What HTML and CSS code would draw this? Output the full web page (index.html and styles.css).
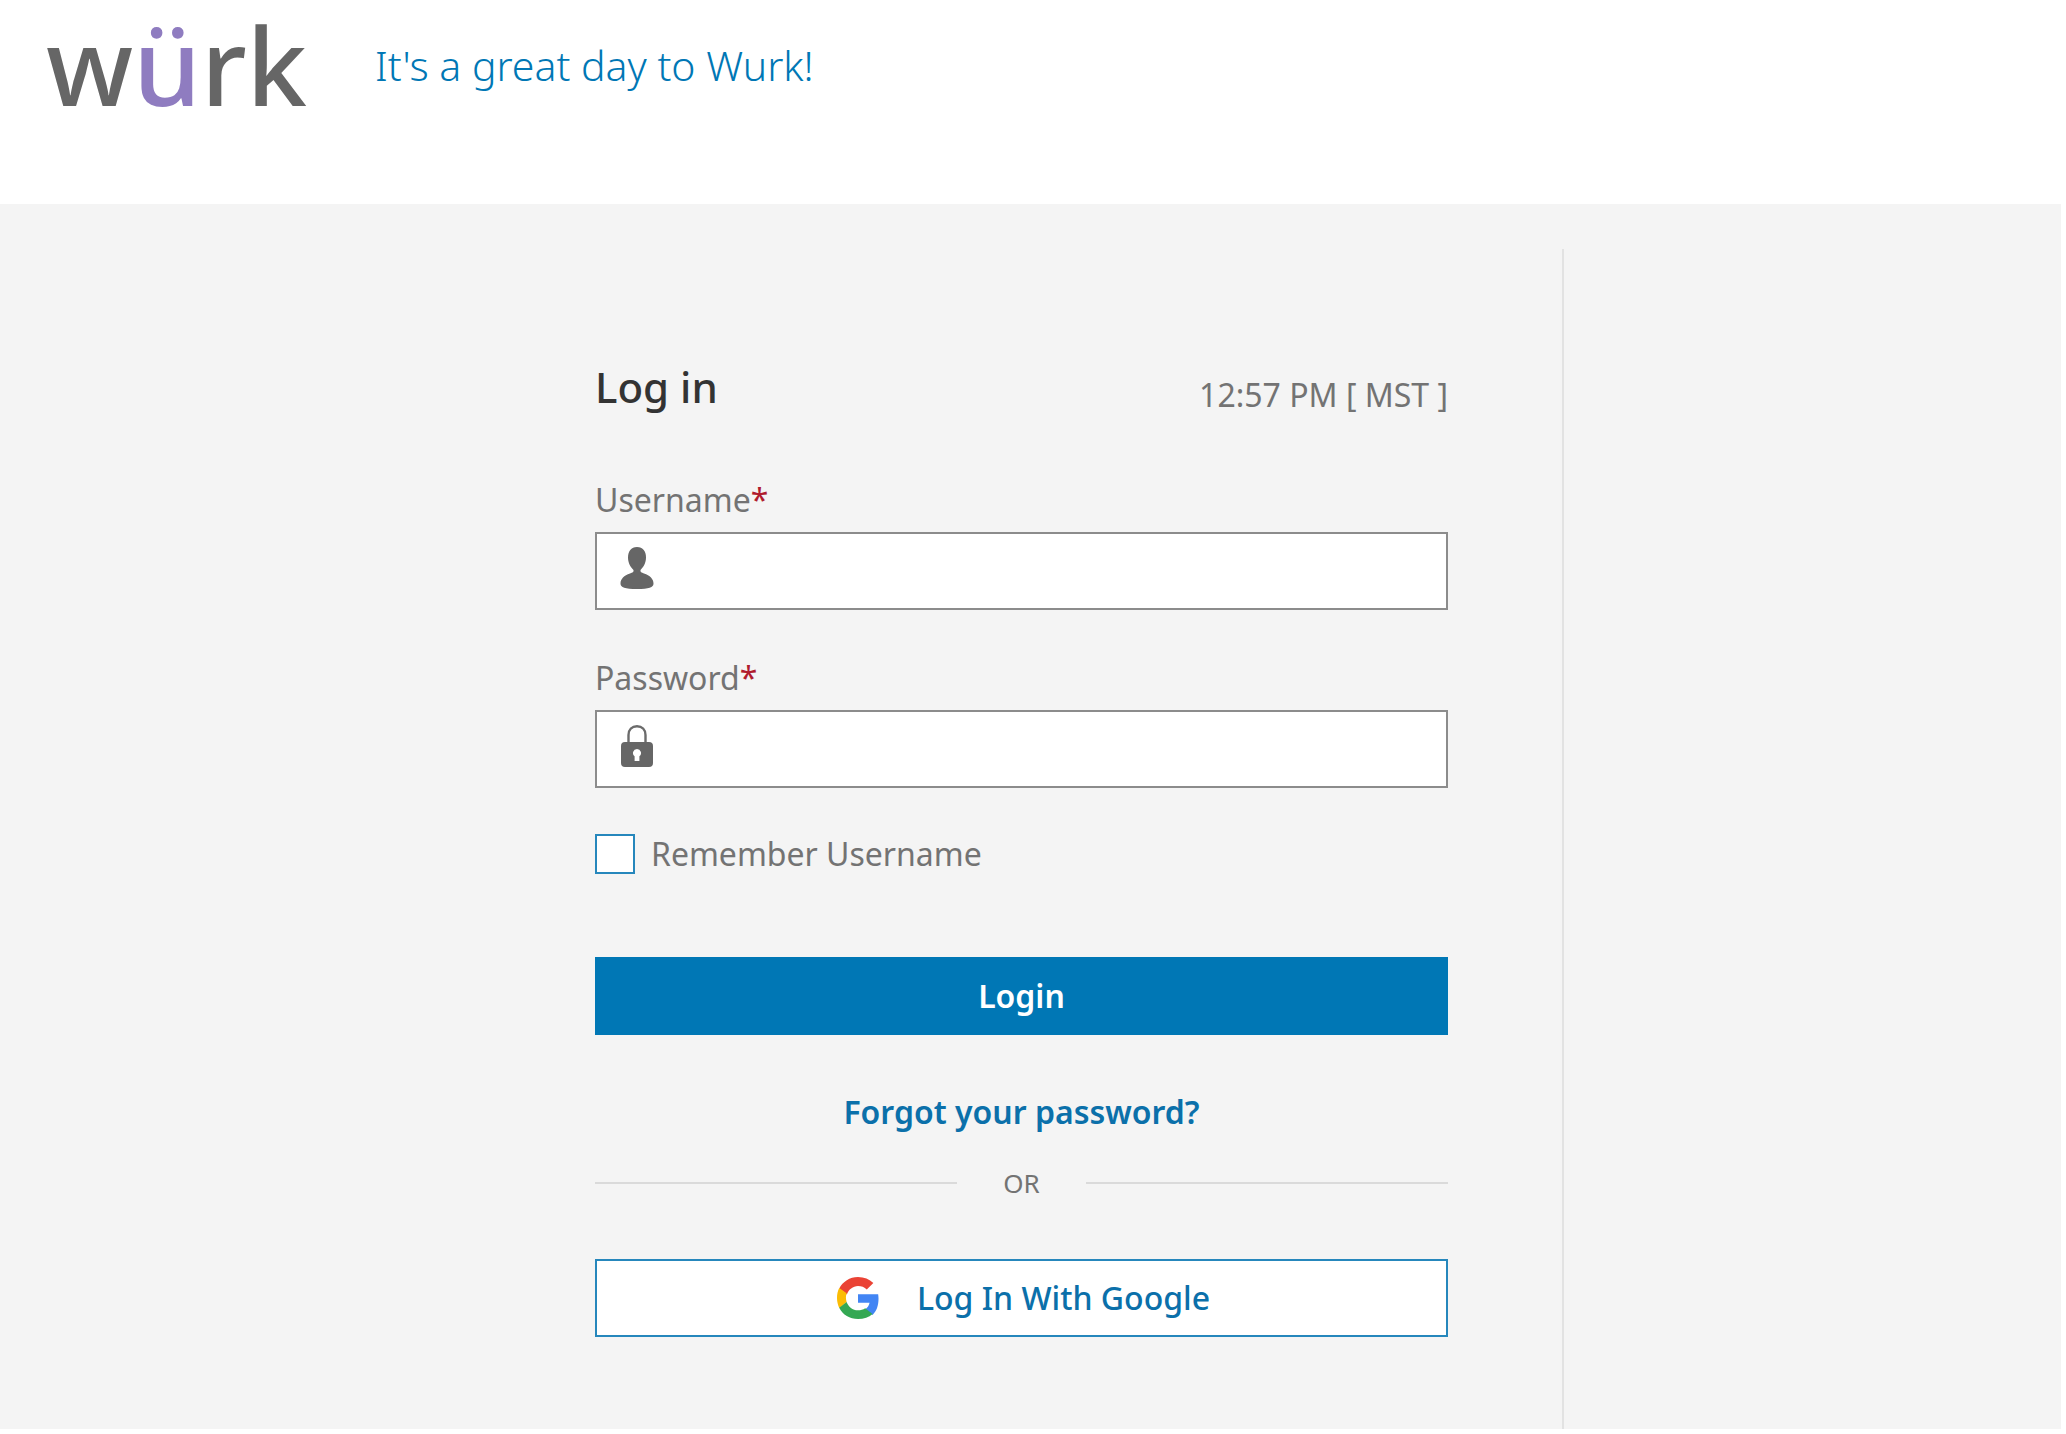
FILE: index.html
```html
<!DOCTYPE html>
<html lang="en">
<head>
    <meta charset="UTF-8">
    <meta name="viewport" content="width=device-width, initial-scale=1.0">
    <title>Log in</title>
    <link rel="stylesheet" href="styles.css">
</head>
<body>
    <header class="head">
        <div class="logo">w<span>ü</span>rk</div>
        <p class="slogan">It's a great day to Wurk!</p>
    </header>
    <main class="content">
        <div class="left">
            <form class="login" action="#">
                <div class="title">
                    <h1>Log in</h1>
                    <span class="time">12:57 PM [ MST ]</span>
                </div>
                <div class="field">
                    <label for="username">Username<span class="star">*</span></label>
                    <div class="inputBox">
                        <svg viewBox="0 0 34 48" width="34" height="48" aria-hidden="true">
                            <path d="M17 0C11 0 8 4.500 8 10.500C8 16 10.500 20 13.500 23C14 25 12.500 25.500 10 26.500C4 28.500 0.500 32 0.500 36.500C0.500 40.500 5 42 17 42S33.500 40.500 33.500 36.500C33.500 32 30 28.500 24 26.500C21.500 25.500 20 25 20.500 23C23.500 20 26 16 26 10.500C26 4.500 23 0 17 0Z"/>
                        </svg>
                        <input type="text" id="username" required>
                    </div>
                </div>
                <div class="field">
                    <label for="password">Password<span class="star">*</span></label>
                    <div class="inputBox">
                        <svg viewBox="0 0 34 48" width="34" height="48" aria-hidden="true">
                            <path d="M8.500 18V10C8.500 4.500 12 1.200 17 1.200S25.500 4.500 25.500 10V18" fill="none" stroke="#6b6b6b" stroke-width="2.400"/>
                            <path fill-rule="evenodd" d="M5 17H29Q33 17 33 21V38Q33 42 29 42H5Q1 42 1 38V21Q1 17 5 17ZM17 24A4 4 0 0 0 14.600 31.200V36H19.400V31.200A4 4 0 0 0 17 24Z"/>
                        </svg>
                        <input type="password" id="password" required>
                    </div>
                </div>
                <div class="remember">
                    <input type="checkbox" id="remember">
                    <label for="remember">Remember Username</label>
                </div>
                <button class="btn" type="submit">Login</button>
                <a class="forgot" href="#">Forgot your password?</a>
                <div class="or">OR</div>
                <button class="btn google" type="button">
                    <svg viewBox="2 2 44 44" width="42" height="42" aria-hidden="true">
                        <path fill="#EA4335" d="M24 11.500c3.540 0 6.710 1.220 9.210 3.600l6.850-6.850C35.900 4.380 30.470 2 24 2 15.400 2 7.960 6.930 4.340 14.120l7.980 6.190C14.200 15.220 18.700 11.500 24 11.500z"/>
                        <path fill="#4285F4" d="M45.500 24.500c0-1.570-.150-3.090-.380-4.550H24v9.020h12.100c-.540 2.780-2.150 5.140-4.560 6.720l7.730 6C43.780 37.540 45.500 31.450 45.500 24.500z"/>
                        <path fill="#FBBC05" d="M12.100 28.200c-.480-1.450-.760-2.990-.760-4.600s.270-3.140.760-4.600l-7.760-5.500C2.700 16.700 2 20.200 2 24c0 3.880.920 7.540 2.560 10.780l7.540-6.580z"/>
                        <path fill="#34A853" d="M24 46c6.200 0 11.400-1.900 15.270-5.310l-7.730-6C29.400 36.130 26.900 36.900 24 36.900c-5.700 0-10.100-3.700-11.900-8.700l-7.760 6C7.960 41.500 15.400 46 24 46z"/>
                    </svg>
                    Log In With Google
                </button>
            </form>
        </div>
    </main>
</body>
</html>
```

FILE: styles.css
```css
*{
    padding: 0;
    margin: 0;
    box-sizing: border-box;
}
body{
    display: flex;
    flex-direction: column;
    min-height: 100vh;
    padding: 0 5px 5px 0;
    background: #fff;
    color: #737373;
    font-family: "Noto Sans", sans-serif;
    font-size: 32px;
    line-height: 44px;
}
.head{
    display: flex;
    align-items: center;
    gap: 68px;
    padding: 0 46px 74px;
}
.logo{
    color: #666;
    font-size: 108px;
    font-weight: 500;
    line-height: 130px;
}
.logo span{
    color: #8f7cc0;
}
.slogan{
    color: #0077b5;
    font-size: 41px;
    font-weight: 300;
    line-height: 60px;
}
.content{
    flex: 1;
    display: grid;
    grid-template-columns: 1fr 497px;
    padding-top: 45px;
    background: #f4f4f4;
}
.left{
    display: flex;
    justify-content: flex-end;
    padding: 108px 114px 0 0;
    border-right: 2px solid #e2e2e2;
}
.login{
    display: flex;
    flex-direction: column;
    width: 100%;
    max-width: 853px;
}
.title{
    display: flex;
    justify-content: space-between;
    align-items: flex-end;
    margin-bottom: 61px;
}
.title h1{
    color: #333;
    font-size: 42px;
    font-weight: 500;
    line-height: 60px;
}
.field{
    margin-bottom: 46px;
}
.field label{
    display: block;
    margin-bottom: 10px;
}
.star{
    color: #b01c2e;
}
.inputBox{
    display: flex;
    align-items: center;
    gap: 16px;
    height: 78px;
    padding: 0 23px;
    background: #fff;
    border: 2px solid #8c8c8c;
}
.inputBox svg{
    fill: #666;
}
.inputBox input{
    flex: 1;
    height: 100%;
    border: 0;
    outline: 0;
    background: none;
    font: inherit;
}
.remember{
    display: flex;
    align-items: center;
    gap: 16px;
    margin-bottom: 83px;
}
.remember input{
    appearance: none;
    width: 40px;
    height: 40px;
    background: #fff;
    border: 2px solid #2687bc;
}
.remember input:checked{
    background: #0077b5;
}
.remember label{
    line-height: 40px;
}
.btn{
    display: flex;
    justify-content: center;
    align-items: center;
    gap: 38px;
    height: 78px;
    background: #0077b5;
    border: 0;
    color: #fff;
    font: inherit;
    font-weight: 600;
    cursor: pointer;
}
.forgot{
    align-self: center;
    margin: 55px 0 31px;
    color: #0b70aa;
    font-weight: 600;
    text-decoration: none;
}
.or{
    display: flex;
    align-items: center;
    gap: 46px;
    margin-bottom: 58px;
    font-size: 26px;
    line-height: 36px;
}
.or::before,
.or::after{
    content: "";
    flex: 1;
    height: 2px;
    background: #dadada;
}
.google{
    padding-left: 4px;
    background: #fff;
    border: 2px solid #2687bc;
    color: #0b70aa;
    font-weight: 500;
}
```
